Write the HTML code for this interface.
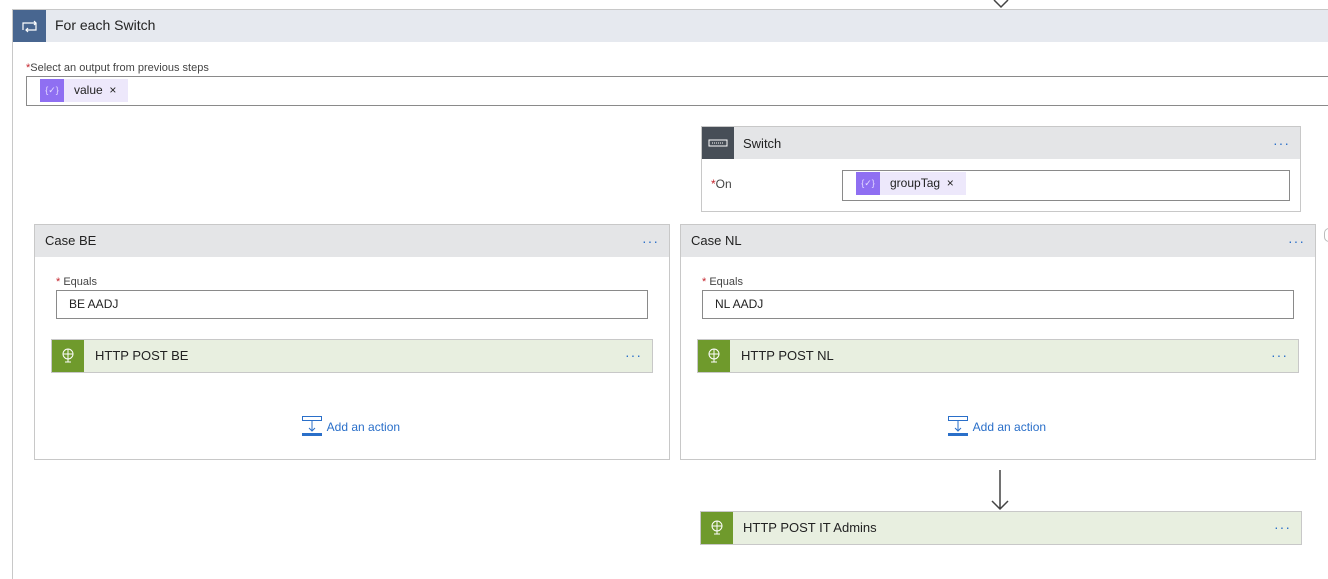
<!DOCTYPE html><html><head><style>
body{margin:0;width:1328px;height:573px;background:#fff;position:relative;overflow:hidden;font-family:"Segoe UI","Liberation Sans",sans-serif;color:#222}
.a{position:absolute;box-sizing:border-box}
.t{font-size:13px;color:#222}
.dots{position:absolute;right:10px;top:8px;color:#2a6fc9;font-size:14px;letter-spacing:1px}
.lbl{font-size:11px;color:#444}.lbl b{color:#c4262e;font-weight:normal}
.tok{position:absolute;height:23px;background:#ede8fb;font-size:12px}
.tok i{position:absolute;left:0;top:0;width:24px;height:23px;background:#8f6ff2;color:#e6dcff;font-style:normal;font-size:9px;text-align:center;line-height:23px}
.http{background:#e8efe0;border:1px solid #c8c8c8}
.http .ic{position:absolute;left:0;top:0;width:32px;height:32px;background:#6f9a2c}
.add{position:absolute;font-size:12px;color:#2a6fc9}
</style></head><body>
<svg class="a" style="left:992px;top:0" width="18" height="10"><path d="M2 0 L9 7 L16 0" stroke="#444" fill="none" stroke-width="1.5"/></svg>
<div class="a" style="left:12px;top:9px;width:1320px;height:570px;border-left:1px solid #c8c8c8;border-top:1px solid #c8c8c8"></div>
<div class="a" style="left:13px;top:10px;width:1315px;height:32px;background:#e6e9ef"></div>
<div class="a" style="left:13px;top:10px;width:33px;height:32px;background:#486690"><svg width="33" height="32"><path d="M10 20 V13 H23 M21 11 L23 13 L21 15 M23 13 V20 H13 M15 18 L13 20 L15 22" stroke="#fff" fill="none" stroke-width="1.2"/></svg></div>
<div class="a t" style="left:55px;top:17px;font-size:14px">For each Switch</div>
<div class="a lbl" style="left:26px;top:62px"><b>*</b>Select an output from previous steps</div>
<div class="a" style="left:26px;top:76px;width:1310px;height:30px;border:1px solid #8a8a8a"></div>
<div class="tok" style="left:40px;top:79px;width:88px"><i>{✓}</i><span style="position:absolute;left:34px;top:4px">value&nbsp;&nbsp;×</span></div>

<div class="a" style="left:701px;top:126px;width:600px;height:86px;border:1px solid #c8c8c8"></div>
<div class="a" style="left:702px;top:127px;width:598px;height:32px;background:#e4e5e7"><div class="dots">···</div></div>
<div class="a" style="left:702px;top:127px;width:32px;height:32px;background:#474e57"><svg width="32" height="32"><rect x="7" y="13" width="18" height="6" fill="none" stroke="#fff"/><path d="M10 16h12" stroke="#fff" stroke-dasharray="1 1"/></svg></div>
<div class="a t" style="left:743px;top:136px">Switch</div>
<div class="a lbl" style="left:711px;top:177px;font-size:12px"><b>*</b>On</div>
<div class="a" style="left:842px;top:170px;width:448px;height:31px;border:1px solid #8a8a8a"></div>
<div class="tok" style="left:856px;top:172px;width:110px"><i>{✓}</i><span style="position:absolute;left:34px;top:4px">groupTag&nbsp;&nbsp;×</span></div>

<div class="a" style="left:34px;top:224px;width:636px;height:236px;border:1px solid #c8c8c8"></div>
<div class="a" style="left:35px;top:225px;width:634px;height:32px;background:#e4e5e7"><div class="dots">···</div><span class="t" style="position:absolute;left:10px;top:8px">Case BE</span></div>
<div class="a lbl" style="left:56px;top:276px"><b>*</b> Equals</div>
<div class="a" style="left:56px;top:290px;width:592px;height:29px;border:1px solid #8a8a8a;font-size:12px;padding:6px 12px">BE AADJ</div>
<div class="a http" style="left:51px;top:339px;width:602px;height:34px"><div class="ic"><svg width="32" height="32"><circle cx="16" cy="14" r="5" fill="none" stroke="#fff"/><path d="M11 14h10M16 9v10M16 19v3M13 22h6" stroke="#fff"/></svg></div><span class="t" style="position:absolute;left:43px;top:8px">HTTP POST BE</span><div class="dots" style="top:7px">···</div></div>
<div class="add" style="left:302px;top:416px"><svg width="22" height="20" style="vertical-align:-5px"><rect x="0.5" y="0.5" width="19" height="4" fill="none" stroke="#2a6fc9"/><path d="M10 5v10M7 12l3 3 3-3" stroke="#2a6fc9" fill="none"/><rect x="0" y="17" width="20" height="3" fill="#2a6fc9"/></svg> Add an action</div>

<div class="a" style="left:680px;top:224px;width:636px;height:236px;border:1px solid #c8c8c8"></div>
<div class="a" style="left:681px;top:225px;width:634px;height:32px;background:#e4e5e7"><div class="dots">···</div><span class="t" style="position:absolute;left:10px;top:8px">Case NL</span></div>
<div class="a lbl" style="left:702px;top:276px"><b>*</b> Equals</div>
<div class="a" style="left:702px;top:290px;width:592px;height:29px;border:1px solid #8a8a8a;font-size:12px;padding:6px 12px">NL AADJ</div>
<div class="a http" style="left:697px;top:339px;width:602px;height:34px"><div class="ic"><svg width="32" height="32"><circle cx="16" cy="14" r="5" fill="none" stroke="#fff"/><path d="M11 14h10M16 9v10M16 19v3M13 22h6" stroke="#fff"/></svg></div><span class="t" style="position:absolute;left:43px;top:8px">HTTP POST NL</span><div class="dots" style="top:7px">···</div></div>
<div class="add" style="left:948px;top:416px"><svg width="22" height="20" style="vertical-align:-5px"><rect x="0.5" y="0.5" width="19" height="4" fill="none" stroke="#2a6fc9"/><path d="M10 5v10M7 12l3 3 3-3" stroke="#2a6fc9" fill="none"/><rect x="0" y="17" width="20" height="3" fill="#2a6fc9"/></svg> Add an action</div>
<div class="a" style="left:1324px;top:228px;width:10px;height:14px;border:1px solid #bbb;border-radius:7px"></div>

<svg class="a" style="left:990px;top:470px" width="20" height="42"><path d="M10 0V39M2 31L10 39L18 31" stroke="#444" fill="none" stroke-width="1.5"/></svg>
<div class="a http" style="left:700px;top:511px;width:602px;height:34px"><div class="ic"><svg width="32" height="32"><circle cx="16" cy="14" r="5" fill="none" stroke="#fff"/><path d="M11 14h10M16 9v10M16 19v3M13 22h6" stroke="#fff"/></svg></div><span class="t" style="position:absolute;left:42px;top:8px">HTTP POST IT Admins</span><div class="dots" style="top:7px">···</div></div>
</body></html>
